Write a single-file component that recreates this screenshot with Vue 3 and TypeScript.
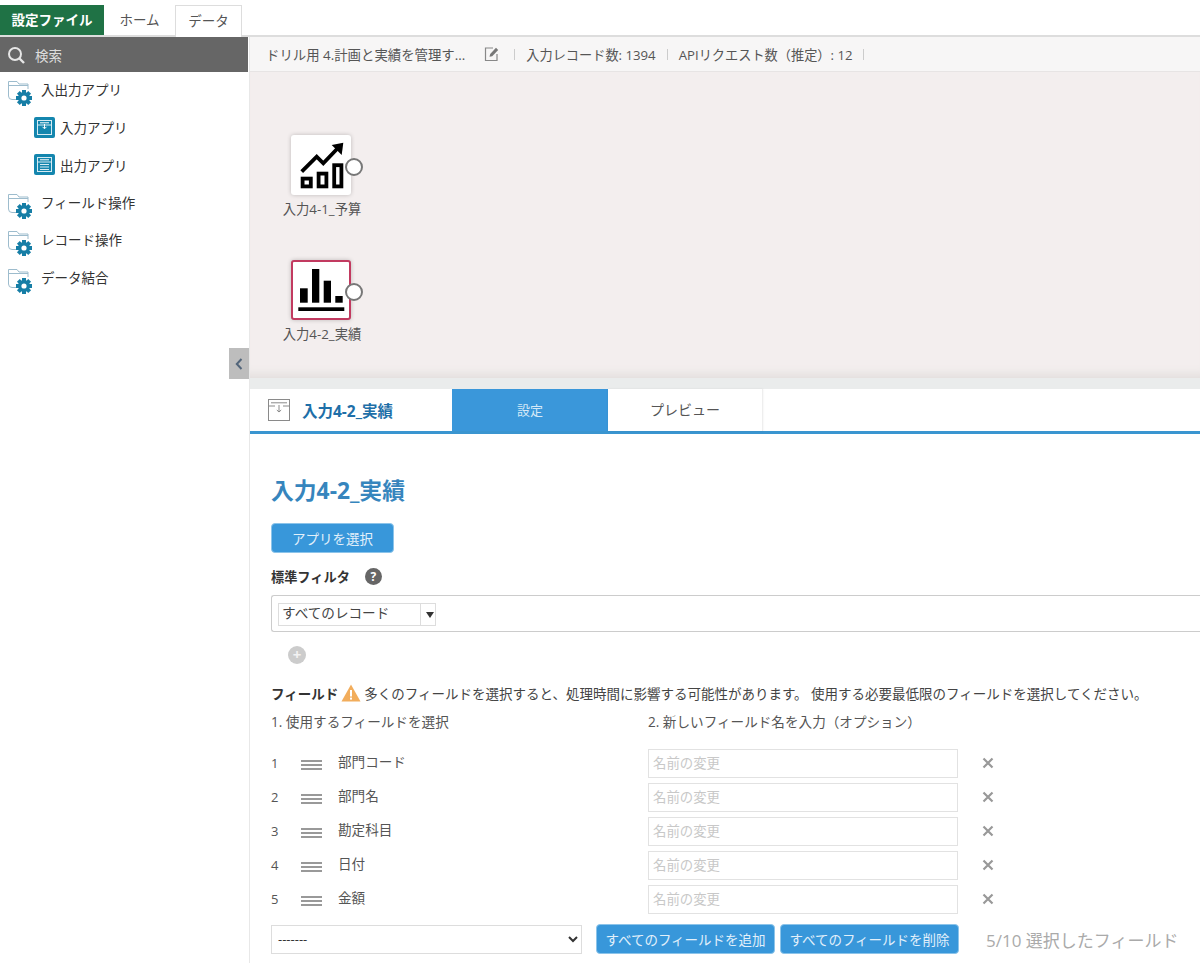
<script setup lang="ts">
const categories = [
  { name: '入出力アプリ', children: [
    { name: '入力アプリ', kind: 'in' },
    { name: '出力アプリ', kind: 'out' },
  ] },
  { name: 'フィールド操作', children: [] },
  { name: 'レコード操作', children: [] },
  { name: 'データ結合', children: [] },
]

const fields = ['部門コード', '部門名', '勘定科目', '日付', '金額']
</script>

<template>
  <div class="page">
    <div class="ribbon">
      <div class="tab-file">設定ファイル</div>
      <div class="tab-plain">ホーム</div>
      <div class="tab-active">データ</div>
    </div>

    <div class="workspace">
      <aside class="sidebar">
        <div class="search">
          <svg width="20" height="20" viewBox="0 0 20 20" fill="none" stroke="#e6e6e6">
            <circle cx="9" cy="9" r="6" stroke-width="2" />
            <path d="M13.5 13.5 L18 18" stroke-width="2.4" />
          </svg>
          <span>検索</span>
        </div>
        <template v-for="cat in categories" :key="cat.name">
          <div class="cat">
            <svg class="cat-icon" width="28" height="28" viewBox="0 0 28 28">
              <path d="M1.5 17 V2.5 H10 L12 5 H21 V10 M1.5 6.5 H21 M1.5 17 Q1.5 20.5 5 20.5 H9" fill="none" stroke="#9dbccd" stroke-width="1" />
              <g fill="#167ea6">
                <circle cx="17" cy="19" r="6" />
                <rect x="15" y="11" width="4" height="16" />
                <rect x="9" y="17" width="16" height="4" />
                <rect x="15" y="11" width="4" height="16" transform="rotate(45 17 19)" />
                <rect x="15" y="11" width="4" height="16" transform="rotate(-45 17 19)" />
              </g>
              <circle cx="17" cy="19" r="2.6" fill="#fff" />
            </svg>
            <span>{{ cat.name }}</span>
          </div>
          <div v-for="child in cat.children" :key="child.name" class="child">
            <svg width="21" height="21" viewBox="0 0 21 21">
              <rect width="21" height="21" rx="2" fill="#1486ae" />
              <rect x="3.5" y="3.5" width="14" height="14" fill="none" stroke="#d6ebf3" stroke-width="1" />
              <path d="M3.5 8 H18" stroke="#d6ebf3" stroke-width="1" />
              <path d="M6 5.8 H15" stroke="#fff" stroke-width="1" />
              <path v-if="child.kind === 'in'" d="M10.5 7 V11.5 M8.5 9.8 L10.5 11.8 L12.5 9.8" fill="none" stroke="#fff" stroke-width="1" />
              <path v-else d="M6 10.5 H15 M6 13 H15 M6 15.5 H15" stroke="#d6ebf3" stroke-width="1" />
            </svg>
            <span>{{ child.name }}</span>
          </div>
        </template>
      </aside>

      <main class="main">
        <div class="infobar">
          <span class="info-title">ドリル用 4.計画と実績を管理す...</span>
          <svg class="edit-icon" width="16" height="16" viewBox="0 0 16 16" fill="none">
            <path d="M13 8 V14.5 H1.5 V2 H9" stroke="#888" stroke-width="1.2" />
            <path d="M5.5 10.8 L6.2 8 L12 1.8 L14.2 4 L8.2 10.2 Z" fill="#777" />
          </svg>
          <i class="sep"></i>
          <span class="info-stat">入力レコード数: 1394</span>
          <i class="sep"></i>
          <span class="info-stat">APIリクエスト数（推定）: 12</span>
          <i class="sep"></i>
        </div>

        <div class="canvas">
          <div class="node node-budget">
            <div class="node-box">
              <svg width="60" height="60" viewBox="0 0 60 60">
                <path d="M10.7 36.7 L25.7 21.7 L32.3 28.3 L46 14" fill="none" stroke="#000" stroke-width="3.8" />
                <path d="M40.7 10 L52.3 7.7 L50.7 20 Z" fill="#000" />
                <g fill="none" stroke="#000" stroke-width="3.8">
                  <rect x="11.6" y="43.6" width="8.2" height="7.8" />
                  <rect x="27.6" y="38.6" width="7.8" height="12.8" />
                  <rect x="43.2" y="30.2" width="7.2" height="21.2" />
                </g>
              </svg>
            </div>
            <i class="port"></i>
            <div class="node-label">入力4-1_予算</div>
          </div>
          <div class="node node-actual">
            <div class="node-box selected">
              <svg width="60" height="60" viewBox="0 0 60 60">
                <g fill="#000">
                  <rect x="9" y="28.3" width="7.7" height="14.4" />
                  <rect x="21" y="9" width="7.3" height="33.7" />
                  <rect x="32.7" y="20.7" width="7.3" height="22" />
                  <rect x="44.3" y="36" width="7.4" height="6.7" />
                  <rect x="7.3" y="47.3" width="46" height="3.7" />
                </g>
              </svg>
            </div>
            <i class="port"></i>
            <div class="node-label">入力4-2_実績</div>
          </div>
        </div>
        <div class="strip"></div>

        <div class="tabs">
          <div class="tabs-title">
            <svg width="24" height="24" viewBox="0 0 24 24" fill="none" stroke="#8a8a8a">
              <rect x="1.5" y="1.5" width="21" height="21" />
              <path d="M1.5 8 H8 M16 8 H22.5 M4 4.8 H20" />
              <path d="M12 7 V14 M9.8 12 L12 14 L14.2 12" />
            </svg>
            <span>入力4-2_実績</span>
          </div>
          <div class="tab-on">設定</div>
          <div class="tab-off">プレビュー</div>
        </div>

        <section class="form">
          <h2>入力4-2_実績</h2>
          <button class="btn btn-app">アプリを選択</button>
          <div class="filter-label">
            <b>標準フィルタ</b>
            <span class="help">?</span>
          </div>
          <div class="filter-box">
            <div class="combo">
              <span class="combo-text">すべてのレコード</span>
              <span class="combo-arrow"></span>
            </div>
          </div>
          <div class="add-circle">+</div>

          <div class="field-note">
            <b>フィールド</b>
            <svg width="20" height="18" viewBox="0 0 20 18">
              <path d="M10 0.5 L19.5 17.5 H0.5 Z" fill="#f2ad5c" />
              <rect x="9" y="6" width="2" height="6.5" fill="#fff" />
              <rect x="9" y="13.6" width="2" height="2" fill="#fff" />
            </svg>
            <span>多くのフィールドを選択すると、処理時間に影響する可能性があります。 使用する必要最低限のフィールドを選択してください。</span>
          </div>

          <div class="col-heads">
            <span class="col-a">1. 使用するフィールドを選択</span>
            <span>2. 新しいフィールド名を入力（オプション）</span>
          </div>

          <div class="rows">
            <div v-for="(field, i) in fields" :key="field" class="row">
              <span class="row-num">{{ i + 1 }}</span>
              <span class="grip"><i></i><i></i><i></i></span>
              <span class="row-name">{{ field }}</span>
              <input class="rename" placeholder="名前の変更" />
              <svg class="remove" width="12" height="12" viewBox="0 0 12 12">
                <path d="M1.5 1.5 L10.5 10.5 M10.5 1.5 L1.5 10.5" stroke="#999" stroke-width="2.2" />
              </svg>
            </div>
          </div>

          <div class="foot">
            <select class="field-select">
              <option>-------</option>
            </select>
            <button class="btn btn-add">すべてのフィールドを追加</button>
            <button class="btn btn-del">すべてのフィールドを削除</button>
            <span class="count">5/10 選択したフィールド</span>
          </div>
        </section>
      </main>
    </div>

    <div class="collapse">
      <svg width="8" height="12" viewBox="0 0 8 12" fill="none">
        <path d="M6.5 1 L1.8 6 L6.5 11" stroke="#52657a" stroke-width="2" />
      </svg>
    </div>
  </div>
</template>

<style>
html, body {
  margin: 0;
  background: #fff;
}
</style>

<style scoped>
.page {
  position: relative;
  width: 1200px;
  height: 963px;
  overflow: hidden;
  font-family: "Open Sans", "Noto Sans CJK JP", sans-serif;
  font-size: 13px;
  color: #444;
  background: #fff;
}

.ribbon {
  display: flex;
  align-items: flex-end;
  height: 35px;
  padding-top: 0;
  border-bottom: 2px solid #ddd;
}
.tab-file {
  width: 104px;
  height: 30px;
  line-height: 30px;
  text-align: center;
  background: #1f7245;
  color: #fff;
  font-weight: 700;
  font-size: 13.5px;
}
.tab-plain {
  width: 71px;
  height: 30px;
  line-height: 30px;
  text-align: center;
  font-size: 13.5px;
  color: #555;
}
.tab-active {
  width: 65px;
  height: 30px;
  line-height: 30px;
  text-align: center;
  font-size: 13.5px;
  color: #555;
  border: 1px solid #ddd;
  border-bottom: none;
  margin-bottom: -2px;
  padding-bottom: 1px;
  background: #fff;
}

.workspace {
  display: flex;
  height: 926px;
}

.sidebar {
  width: 249px;
  flex: none;
  border-right: 1px solid #e8e8e8;
}
.search {
  display: flex;
  align-items: center;
  gap: 9px;
  height: 35px;
  margin-right: 1px;
  padding-left: 6px;
  background: #666;
  color: #ddd;
  font-size: 13.5px;
}
.cat {
  position: relative;
  display: flex;
  align-items: flex-start;
  height: 37.5px;
  padding-left: 41px;
  line-height: 36px;
  font-size: 13.5px;
  color: #333;
}
.cat-icon {
  position: absolute;
  left: 7px;
  top: 7px;
}
.child {
  display: flex;
  align-items: center;
  gap: 5px;
  height: 37.5px;
  margin-top: -1px;
  margin-bottom: 1px;
  padding-left: 34px;
  font-size: 13.5px;
  color: #333;
}

.main {
  flex: 1;
  min-width: 0;
  display: flex;
  flex-direction: column;
}
.infobar {
  display: flex;
  align-items: center;
  gap: 11px;
  box-sizing: border-box;
  height: 35px;
  padding-left: 16px;
  background: #f7f6f6;
  border-bottom: 1px solid #e7e4e4;
  font-size: 13.4px;
  color: #555;
}
.info-title {
  margin-right: 8px;
}
.info-stat {
  font-size: 13.2px;
}
.edit-icon {
  margin-right: 3px;
}
.sep {
  width: 1px;
  height: 11px;
  background: #ccc;
}

.canvas {
  position: relative;
  height: 306px;
  background: #f3eeee;
  box-shadow: inset 0 -12px 10px -8px #e2dedd;
}
.node {
  position: absolute;
  left: 32px;
  width: 80px;
}
.node-budget {
  top: 63px;
}
.node-actual {
  top: 188px;
}
.node-box {
  box-sizing: border-box;
  width: 60px;
  height: 60px;
  margin-left: 9px;
  display: flex;
  align-items: center;
  justify-content: center;
  background: #fff;
  border-radius: 3px;
  box-shadow: 0 0 4px rgba(0, 0, 0, 0.22);
}
.node-box svg {
  flex: none;
}
.node-box.selected {
  border: 2px solid #c23a60;
}
.port {
  position: absolute;
  left: 63px;
  top: 23px;
  box-sizing: border-box;
  width: 18px;
  height: 18px;
  border-radius: 50%;
  background: #fff;
  border: 2px solid #777;
}
.node-label {
  margin-top: 4px;
  width: 80px;
  white-space: nowrap;
  font-size: 13.3px;
  color: #555;
  text-align: center;
}

.strip {
  height: 11px;
  background: #eaecec;
}

.tabs {
  display: flex;
  height: 42px;
  border-bottom: 3px solid #3a95d0;
  box-sizing: content-box;
}
.tabs-title {
  display: flex;
  align-items: center;
  gap: 11px;
  width: 185px;
  padding-left: 17px;
  font-size: 15.5px;
  font-weight: 700;
  color: #1e6fa8;
}
.tab-on {
  width: 156px;
  line-height: 42px;
  text-align: center;
  background: #3a97da;
  color: #d5e9f7;
  font-size: 13px;
}
.tab-off {
  width: 154px;
  line-height: 42px;
  text-align: center;
  border-right: 1px solid #eee;
  box-shadow: 0 0 2px rgba(0, 0, 0, 0.08);
  font-size: 14px;
  color: #555;
}

.form {
  padding: 44px 0 0 21px;
}
.form h2 {
  margin: 0;
  font-size: 22.8px;
  line-height: 26px;
  font-weight: 700;
  color: #3685bd;
}
.btn {
  font-family: inherit;
  background: #3897da;
  color: #e2f0fa;
  border: 1px solid #8cc4ea;
  border-radius: 4px;
  font-size: 13.5px;
  padding: 0;
}
.btn-app {
  display: block;
  width: 123px;
  height: 30px;
  margin-top: 19px;
}
.filter-label {
  display: flex;
  align-items: center;
  gap: 15px;
  margin-top: 13px;
  height: 20px;
  font-size: 13.2px;
  color: #333;
}
.help {
  width: 17px;
  height: 17px;
  line-height: 17px;
  border-radius: 50%;
  background: #666;
  color: #fff;
  font-size: 12px;
  font-weight: 700;
  text-align: center;
}
.filter-box {
  box-sizing: border-box;
  height: 37px;
  margin-top: 9px;
  padding: 7px 6px;
  border: 1px solid #ccc;
  border-right: none;
  border-radius: 3px 0 0 3px;
}
.combo {
  display: flex;
  width: 156px;
  height: 21px;
  border: 1px solid #ddd;
}
.combo-text {
  width: 138px;
  padding-left: 3px;
  font-size: 13.6px;
  line-height: 18px;
  color: #444;
  border-right: 1px solid #ddd;
}
.combo-arrow {
  margin: 8px 0 0 5px;
  width: 0;
  height: 0;
  border-left: 4px solid transparent;
  border-right: 4px solid transparent;
  border-top: 6px solid #333;
}
.add-circle {
  width: 18px;
  height: 18px;
  line-height: 17px;
  margin: 14px 0 0 17px;
  border-radius: 50%;
  background: #ccc;
  color: #f2f2f2;
  font-size: 15px;
  font-weight: 700;
  text-align: center;
}
.field-note {
  display: flex;
  align-items: center;
  gap: 3px;
  margin-top: 19px;
  height: 20px;
  white-space: nowrap;
  font-size: 13.5px;
  color: #444;
}
.field-note b {
  color: #333;
}
.col-heads {
  display: flex;
  margin-top: 9px;
  height: 20px;
  line-height: 20px;
  font-size: 13.6px;
  color: #555;
}
.col-a {
  width: 377px;
}
.rows {
  margin-top: 14px;
}
.row {
  display: flex;
  align-items: center;
  height: 34px;
}
.row-num {
  width: 30px;
  font-size: 13px;
  color: #555;
}
.grip {
  display: flex;
  flex-direction: column;
  gap: 2px;
  width: 21px;
  margin-top: 3px;
}
.grip i {
  height: 2px;
  background: #999;
}
.row-name {
  width: 310px;
  margin-left: 16px;
  margin-top: -5px;
  font-size: 13.6px;
  color: #555;
}
.rename {
  box-sizing: border-box;
  width: 310px;
  height: 29px;
  padding: 0 4px;
  border: 1px solid #e2e2e2;
  font-family: inherit;
  font-size: 13.4px;
  outline: none;
}
.rename::placeholder {
  color: #c8c8c8;
}
.remove {
  margin-left: 24px;
}
.foot {
  display: flex;
  align-items: center;
  margin-top: 8px;
}
.field-select {
  box-sizing: border-box;
  width: 311px;
  height: 29px;
  padding-left: 2px;
  border: 1px solid #ddd;
  background: #fff;
  font-family: inherit;
  font-size: 13px;
  color: #333;
}
.btn-add {
  width: 179px;
  height: 30px;
  margin-left: 14px;
}
.btn-del {
  width: 179px;
  height: 30px;
  margin-left: 5px;
}
.count {
  margin-left: 27px;
  font-size: 17px;
  color: #aaa;
  white-space: nowrap;
}

.collapse {
  position: absolute;
  left: 229px;
  top: 348px;
  width: 20px;
  height: 31px;
  display: flex;
  align-items: center;
  justify-content: center;
  background: #bdbdbd;
}
</style>
